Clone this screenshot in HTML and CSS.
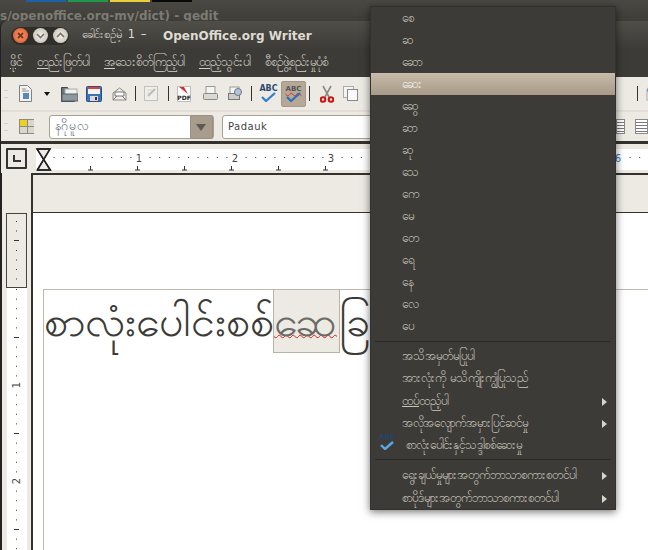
FILE: index.html
```html
<!DOCTYPE html>
<html lang="my">
<head><meta charset="utf-8"><title>Writer</title><link rel="stylesheet" href="styles.css"></head>
<body>
<div class="panel"><i class="s blue"></i><i class="s green"></i><i class="s yellow"></i><i class="s black"></i></div>
<div class="gedit">s/openoffice.org-my/dict) - gedit</div>
<main class="writer">
  <header class="titlebar">
    <div class="wbtns">
      <svg class="wb close" width="15" height="15" viewBox="0 0 15 15"><path d="M5 5l5 5M10 5l-5 5" stroke="#7a3418" stroke-width="1.800"/></svg>
      <svg class="wb" width="15" height="15" viewBox="0 0 15 15"><path d="M4 6l3.500 3.500L11 6" fill="none" stroke="#77736a" stroke-width="1.600"/></svg>
      <svg class="wb" width="15" height="15" viewBox="0 0 15 15"><path d="M4 9l3.500-3.500L11 9" fill="none" stroke="#77736a" stroke-width="1.600"/></svg>
    </div>
    <div class="title"><span class="my">ခေါင်းစဉ်မဲ့ 1 –</span><b>OpenOffice.org Writer</b></div>
  </header>
  <nav class="menubar">
    <span><u>ဖို</u>င်</span><span><u>တ</u>ည်းဖြတ်ပါ</span><span><u>အ</u>သေးစိတ်ကြည့်ပါ</span><span><u>ထ</u>ည့်သွင်းပါ</span><span>စီစဉ်ဖွဲ့စည်းမှုပုံစံ</span>
  </nav>
  <section class="toolbar">
    <i class="grip"></i>
    <svg class="ic m-arrow" width="15" height="17" viewBox="0 0 15 17"><path d="M1.500.500h8l4 4v12h-12z" fill="#f4f2ee" stroke="#7b8288"/><rect x="5" y="8" width="6" height="6" fill="#5b86b8"/><path d="M4 4h4M4 6h7" stroke="#8a9098"/></svg>
    <i class="arrow"></i>
    <svg class="ic m8" width="17" height="16" viewBox="0 0 17 16"><path d="M.500 1.500h6l1 2h6v12h-13z" fill="#68757c" stroke="#3f484e"/><rect x="4" y="3" width="12" height="6" fill="#f0f0ee" stroke="#aaa"/><rect x="1" y="8" width="16" height="7" fill="#8c989e" stroke="#56616a"/></svg>
    <svg class="ic m10" width="16" height="16" viewBox="0 0 16 16"><rect x=".5" y=".5" width="15" height="15" rx="1" fill="#3f72b5" stroke="#274f86"/><rect x="2" y="1" width="12" height="2" fill="#e04030"/><rect x="2" y="3" width="12" height="5" fill="#f4f4f4"/><rect x="4" y="10" width="8" height="5" fill="#d8d8d8"/><rect x="9" y="11" width="2" height="3" fill="#333"/></svg>
    <svg class="ic m8" width="15" height="14" viewBox="0 0 15 14"><path d="M1 6l6.500-5 6.500 5v7H1z" fill="#f0eeea" stroke="#8a8a86"/><path d="M3 5h9v4H3zM1 13l4-4M14 13l-4-4" fill="#fff" stroke="#777"/></svg>
    <i class="vsep m8"></i>
    <svg class="ic m9" width="15" height="15" viewBox="0 0 15 15"><rect x=".5" y=".5" width="13" height="14" fill="#f0eeea" stroke="#c4c1ba"/><path d="M4 10l7-7" stroke="#bbb" stroke-width="2"/><path d="M3 4h5M3 7h3" stroke="#d8d5ce"/></svg>
    <i class="vsep m8"></i>
    <svg class="ic m12" width="14" height="16" viewBox="0 0 14 16"><path d="M.500.500h13v15H.500z" fill="#fff" stroke="#bbb"/><path d="M2 1l9 7-4-7z" fill="#d32f2f"/><text x="7" y="14" class="pdf">PDF</text></svg>
    <svg class="ic m10" width="15" height="15" viewBox="0 0 15 15"><rect x="3" y=".5" width="9" height="7" fill="#f4f4f4" stroke="#999"/><rect x=".5" y="7.500" width="14" height="6" rx="1" fill="#d8d8d4" stroke="#888"/></svg>
    <svg class="ic m8" width="15" height="15" viewBox="0 0 15 15"><rect x="2" y="1" width="9" height="7" fill="#f4f4f4" stroke="#999"/><rect x=".5" y="7.500" width="11" height="6" fill="#ccc" stroke="#777"/><circle cx="10" cy="6" r="3.500" fill="#a9c6e4" stroke="#777"/></svg>
    <i class="vsep m8"></i>
    <span class="ic spell m4"><em>ABC</em><svg width="15" height="10" viewBox="0 0 15 10"><path d="M1 5l4 4 9-8" fill="none" stroke="#2f7fd0" stroke-width="2.200"/></svg></span>
    <span class="ic spell on m3"><em>ABC</em><svg width="15" height="10" viewBox="0 0 15 10"><path d="M1 5l4 4 9-8" fill="none" stroke="#2f6fb5" stroke-width="2.200"/></svg></span>
    <i class="vsep m10"></i>
    <svg class="ic m9" width="14" height="18" viewBox="0 0 14 18"><path d="M3 1l6 11M11 1L5 12" stroke="#8a8a88" stroke-width="1.600"/><circle cx="3" cy="14.500" r="2.300" fill="none" stroke="#c11" stroke-width="2"/><circle cx="11" cy="14.500" r="2.300" fill="none" stroke="#c11" stroke-width="2"/></svg>
    <svg class="ic m10" width="15" height="15" viewBox="0 0 15 15"><rect x=".5" y=".5" width="10" height="11" fill="#f4f4f4" stroke="#aaa"/><rect x="4.500" y="3.500" width="10" height="11" fill="#fafafa" stroke="#888"/></svg>
    <i class="spacer top-spacer"></i>
    <i class="vsep m8"></i>
    <svg class="ic" width="16" height="15" viewBox="0 0 16 15"><rect x="1" y="4" width="11" height="10" fill="#f4f4f4" stroke="#aaa"/><circle cx="5" cy="4" r="3.500" fill="#a9c6e4" stroke="#6a8bb0"/><path d="M7 13l6-7" stroke="#b8860b" stroke-width="2"/></svg>
  </section>
  <section class="toolbar formatbar">
    <i class="grip"></i>
    <span class="styles"><i></i><i></i><i></i><i></i></span>
    <span class="combo"><span class="val">နဂိုမူလ</span><span class="drop"></span></span>
    <span class="combo font"><span class="val">Padauk</span></span>
    <i class="spacer fmt-spacer"></i>
    <span class="align"></span><span class="align right"></span>
  </section>
  <section class="hruler">
    <span class="corner"></span>
    <svg class="rulersvg" width="621" height="25" viewBox="0 0 621 25">
      <defs><pattern id="dots" width="9.600" height="25" patternUnits="userSpaceOnUse" x="26.600"><rect x="0" y="9" width="1" height="1" fill="#333"/></pattern></defs>
      <rect x="0" y="1" width="621" height="21" fill="#fff"/>
      <rect x="0" y="1" width="9" height="21" fill="#edeae4"/>
      <rect x="24" y="1" width="597" height="21" fill="url(#dots)"/>
      <rect x="108" y="4" width="8" height="13" fill="#fff"/><rect x="204" y="4" width="8" height="13" fill="#fff"/><rect x="300" y="4" width="8" height="13" fill="#fff"/><rect x="587" y="4" width="8" height="13" fill="#fff"/>
      <path d="M10 1h13l-12.500 21h13z" fill="#edeae4" stroke="#222" stroke-width="1.500"/>
      <path d="M9.500 1h14M10 22h14M16.500 11.500L10 1M16.500 11.500L23 1M16.500 11.500L10 22M16.500 11.500L23 22" fill="none" stroke="#222" stroke-width="1.300"/>
      <path d="M63.500 22v-4M110.500 22v-4M157.500 22v-4M204.500 22v-4M251.500 22v-4M298.500 22v-4M61 22h5M108 22h5M155 22h5M202 22h5M249 22h5M296 22h5" stroke="#333"/>
      <text x="112" y="14" class="rnum">1</text><text x="208" y="14" class="rnum">2</text><text x="304" y="14" class="rnum">3</text><text x="591" y="14" class="rnum blue6">6</text>
    </svg>
  </section>
  <section class="workspace">
    <aside class="vruler">
      <div class="margin">
        <svg width="19" height="73" viewBox="0 0 19 73"><path d="M9 7.500h1M9 17h1M7 26.500h5M9 36.500h1M9 46h1M9 55.500h1M9 65h1" stroke="#333"/></svg>
      </div>
      <svg class="vsvg" width="20" height="262" viewBox="0 0 20 262">
        <defs><pattern id="vd" width="20" height="9.600" y="1" patternUnits="userSpaceOnUse"><rect x="9" y="0" width="1" height="1" fill="#333"/></pattern></defs>
        <rect width="20" height="262" fill="url(#vd)"/>
        <rect x="5" y="92" width="10" height="10" fill="#fff"/><rect x="5" y="188" width="10" height="10" fill="#fff"/>
        <text transform="translate(13 97) rotate(-90)" class="rnum">1</text>
        <text transform="translate(13 193) rotate(-90)" class="rnum">2</text>
        <path d="M7 49.500h5M7 145.500h5M7 241.500h5" stroke="#333"/>
      </svg>
    </aside>
    <div class="pagearea">
      <div class="headerband"></div>
      <article class="page">
        <div class="frame"><span class="doc">စာလုံးပေါင်းစစ်<mark class="word">ဆေ</mark>ခြ</span></div>
      </article>
    </div>
  </section>
</main>
<aside class="ctx">
  <ul class="group top">
    <li>စေ</li><li>ဆ</li><li>ဆော</li><li class="hl">ဆေး</li><li>ဆွေ</li><li>ဆာ</li><li>ဆု</li><li>သေ</li><li>ကေ</li><li>မေ</li><li>တေ</li><li>ရေ</li><li>နေ</li><li>လေ</li><li>ပေ</li>
  </ul>
  <ul class="group mid">
    <li>အသိအမှတ်မပြုပါ</li><li>အားလုံးကို မသိကျိုးကျွံပြုသည်</li><li class="sub"><u>ထပ်</u>ထည့်ပါ</li><li class="sub">အလိုအလျောက်အမှားပြင်ဆင်မှု</li>
    <li class="check"><span class="abc"><em>ABC</em><svg width="14" height="9" viewBox="0 0 14 9"><path d="M1 4l4 4 8-7" fill="none" stroke="#5aa8e8" stroke-width="2.400"/></svg></span>စာလုံးပေါင်းနှင့်သဒ္ဒါစစ်ဆေးမှု</li>
  </ul>
  <ul class="group end">
    <li class="sub">ရွေးချယ်မှုများအတွက်ဘာသာစကားစတင်ပါ</li><li class="sub">စာပိုဒ်များအတွက်ဘာသာစကားစတင်ပါ</li>
  </ul>
</aside>
</body>
</html>
```
FILE: styles.css
```css
* { box-sizing: border-box; }
html, body { margin: 0; padding: 0; }
body { width: 648px; height: 550px; overflow: hidden; position: relative; background: #3a3833; font-family: "DejaVu Sans", "Noto Sans", sans-serif; }
ul { list-style: none; margin: 0; padding: 0; }
.panel { display: flex; gap: 2px; height: 2px; padding-left: 26px; background: #4a4842; }
.s { width: 40px; height: 2px; display: block; }
.blue { background: #1c62a8; } .green { background: #1f9a4d; } .yellow { background: #e8cf3a; } .black { background: #0a0a0a; }
.gedit { height: 19px; padding: 7px 0 0 0; font-size: 12px; line-height: 15px; font-weight: bold; color: #7d7b74; background: linear-gradient(#4a4842, #3f3d38); white-space: nowrap; }
.writer { position: absolute; left: 1px; top: 21px; width: 647px; height: 529px; display: flex; flex-direction: column; border-radius: 6px 0 0 0; background: #3c3b37; box-shadow: -1px 0 0 #222; overflow: hidden; }
.titlebar { height: 29px; flex: none; display: flex; align-items: center; gap: 13px; padding-left: 10px; background: linear-gradient(#504e48, #3c3b37); border-radius: 6px 0 0 0; }
.wbtns { display: flex; gap: 5px; align-items: center; padding: 2px; height: 18px; width: 58px; border-radius: 9px; background: #2f2e2a; }
.wb { flex: none; border-radius: 50%; background: radial-gradient(#f4f1ea, #bdb8ac); }
.wb.close { background: radial-gradient(#f59a6a, #d9552a); }
.title { font-size: 12px; color: #dfdbd2; white-space: nowrap; display: flex; align-items: center; }
.title .my { font-size: 11.500px; width: 81px; word-spacing: 2px; }
.title b { font-weight: bold; }
.menubar { height: 27px; flex: none; display: flex; align-items: center; gap: 15px; padding: 0 0 2px 9px; font-size: 12.300px; color: #d3cfc5; white-space: nowrap; }
.menubar u { text-underline-offset: 2px; }
.toolbar { height: 33px; flex: none; display: flex; align-items: center; padding-left: 3px; background: #edeae4; }
.grip { width: 4px; height: 8px; margin-right: 10px; flex: none; border-top: 1px solid #d5d1c9; border-bottom: 1px solid #d5d1c9; }
.ic { flex: none; }
.m3 { margin-right: 3px; } .m4 { margin-right: 4px; } .m8 { margin-right: 8px; } .m9 { margin-right: 9px; } .m10 { margin-right: 10px; } .m12 { margin-right: 12px; }
.m-arrow { margin-right: 11px; }
.arrow { width: 0; height: 0; flex: none; border: 3px solid transparent; border-top: 4px solid #111; margin: 4px 11px 0 0; }
.vsep { width: 1px; height: 15px; flex: none; background: #333; }
.pdf { font: bold 6px "DejaVu Sans", sans-serif; text-anchor: middle; fill: #222; }
.spell { display: flex; flex-direction: column; align-items: center; width: 17px; height: 26px; justify-content: center; }
.spell em { font: bold 8px/8px "DejaVu Sans", sans-serif; font-style: normal; color: #2b4a72; }
.spell svg { margin-top: -1px; }
.spell.on { width: 25px; background: #b5a897; border: 1px solid #a4988a; border-radius: 2px; }
.spell.on em { font-size: 7px; color: #555; text-decoration: underline wavy #c33 1px; text-decoration-skip-ink: none; }
.spacer { flex: none; }
.top-spacer { width: 269px; }
.fmt-spacer { width: 144px; }
.formatbar { height: 34px; border-top: 2px solid #e2ded7; border-bottom: 3px solid #33322e; }
.styles { display: grid; grid-template-columns: 7px 6px; gap: 1px; width: 15px; height: 15px; flex: none; background: #8d8a84; border: 1px solid #8d8a84; margin: 0 15px 0 1px; }
.styles i { background: #d9d6cf; }
.styles i:first-child { background: #ecd21c; }
.combo { display: flex; width: 165px; flex: none; height: 24px; background: #fff; border: 1px solid #aaa092; border-radius: 3px; font-size: 12.500px; color: #66707c; align-items: center; margin-right: 8px; }
.combo .val { flex: 1; padding-left: 5px; }
.combo .drop { width: 23px; height: 24px; flex: none; background: #a89c8c; border: 1px solid #9a8f80; border-radius: 2px; position: relative; }
.combo .drop::after { content: ""; position: absolute; left: 5px; top: 8px; border: 5px solid transparent; border-top: 7px solid #5e5a52; }
.combo.font { width: 250px; font-size: 10px; letter-spacing: .5px; color: #444; margin-right: 0; }
.align { width: 9px; height: 15px; flex: none; border: 1px solid #888; background: repeating-linear-gradient(#fff 0 2px, #777 2px 3px); }
.align.right { margin-left: 10px; width: 13px; }
.hruler { height: 29px; flex: none; display: flex; align-items: flex-start; padding: 4px 0 0 5px; background: #edeae4; }
.corner { width: 21px; height: 21px; border: 2px solid #333; border-radius: 1px; flex: none; background: #edeae4; position: relative; }
.corner::after { content: ""; position: absolute; left: 5px; top: 5px; width: 6px; height: 5px; border-left: 2px solid #333; border-bottom: 2px solid #333; }
.rulersvg { flex: none; }
.rnum { font: 10px "DejaVu Sans", sans-serif; fill: #444; text-anchor: middle; }
.blue6 { fill: #3c6ab0; }
.workspace { flex: 1; display: flex; min-height: 0; background: #edeae4; border-left: 1px solid #222; }
.vruler { width: 29px; flex: none; padding: 40px 0 0 4px; display: flex; flex-direction: column; }
.margin { width: 21px; height: 75px; border: 1px solid #444; background: #edeae4; flex: none; }
.margin svg { display: block; }
.vsvg { background: #fff; flex: none; margin-left: 1px; }
.pagearea { flex: 1; border: solid #33322e; border-width: 2px 0 0 2px; display: flex; flex-direction: column; }
.headerband { height: 38px; flex: none; border-bottom: 1px solid #33322e; }
.page { flex: 1; background: #fff; padding: 76px 0 0 10px; }
.frame { height: 300px; border: solid #bdb9b0; border-width: 1px 0 0 1px; white-space: nowrap; overflow: hidden; }
.doc { font-size: 43px; line-height: 62px; color: #3c3b37; display: block; height: 62px; }
.word { display: inline-block; height: 62px; padding-right: 2px; background: #edeae4; color: #6a6a66; outline: 1px solid #b9b2a5; text-decoration: underline wavy #d22 1px; text-decoration-skip-ink: none; text-underline-offset: -2px; }
.ctx { position: absolute; left: 370px; top: 6px; width: 246px; height: 504px; background: #3c3b37; box-shadow: 0 2px 8px rgba(0,0,0,.55); font-size: 12px; color: #c8c4b9; border: 1px solid #33322e; }
.group li { height: 22px; line-height: 22px; padding-left: 31px; white-space: nowrap; position: relative; }
.top { border-bottom: 1px solid #2a2926; padding-bottom: 4px; margin: 0 4px; }
.top li { margin: 0 -4px; }
.hl { background: linear-gradient(#c8bbaa, #a89a87); color: #f4f1ea; }
.mid { padding: 3px 0 3px; margin: 0 4px; border-bottom: 1px solid #2a2926; }
.mid li { margin: 0 -4px; height: 22.300px; }
.end { padding-top: 4px; }
.end li { height: 23px; }
.sub::after { content: ""; position: absolute; right: 8px; top: 8px; border: 4px solid transparent; border-left: 5px solid #d8d4ca; border-right: 0; }
.group .check { padding-left: 35px; }
.abc { position: absolute; left: 8px; top: 0; width: 16px; display: flex; flex-direction: column; align-items: center; }
.abc em { font: bold 7px/7px "DejaVu Sans", sans-serif; color: #24466e; }
```
